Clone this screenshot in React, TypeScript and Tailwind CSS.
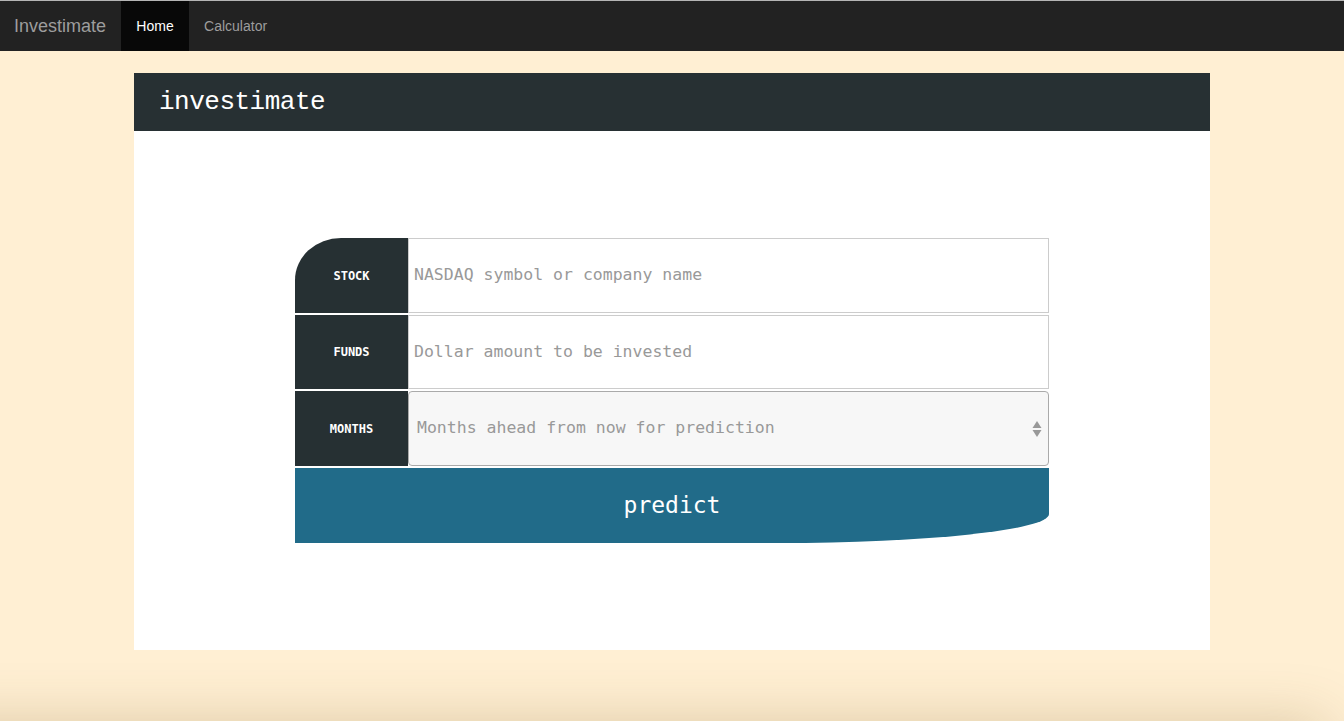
import React from "react";

const mono = { fontFamily: '"DejaVu Sans Mono", "Liberation Mono", monospace' };

function Label({ text, rounded }: { text: string; rounded?: boolean }) {
  return (
    <div
      className={`w-[113px] shrink-0 bg-[#263033] flex items-center justify-center text-white text-[12px] font-bold ${rounded ? "rounded-tl-[46px_42px]" : ""}`}
      style={mono}
    >
      {text}
    </div>
  );
}

export default function App() {
  return (
    <div
      className="relative h-screen overflow-hidden bg-[#ffefd3]"
      style={{ fontFamily: '"Liberation Sans", Arial, sans-serif' }}
    >
      <nav className="h-[51px] border-t border-[#b5b5b5] bg-[#222222] flex items-stretch">
        <div className="px-[14px] flex items-center text-[18px] text-[#9d9d9d]">Investimate</div>
        <div className="w-[68px] ml-[1px] bg-[#080808] flex items-center justify-center text-[14px] text-white">
          Home
        </div>
        <div className="px-[15px] flex items-center text-[14px] text-[#9d9d9d]">Calculator</div>
      </nav>

      <div className="w-[1076px] ml-[134px] mt-[22px] bg-white">
        <div className="h-[58px] bg-[#273033] flex items-center pl-[25px]">
          <span
            className="text-white text-[26px] leading-none tracking-[-0.5px]"
            style={{ fontFamily: '"Liberation Mono", "Courier New", monospace' }}
          >
            investimate
          </span>
        </div>
        <div className="pt-[107px] pb-[107px] flex justify-center">
          <div className="w-[754px] flex flex-col gap-[2px]">
            <div className="h-[75px] flex">
              <Label text="STOCK" rounded />
              <div className="flex-1 border border-[#cccccc] flex items-center pl-[5px] text-[16.5px] text-[#999999]" style={mono}>
                NASDAQ symbol or company name
              </div>
            </div>
            <div className="h-[74px] flex">
              <Label text="FUNDS" />
              <div className="flex-1 border border-[#cccccc] flex items-center pl-[5px] text-[16.5px] text-[#999999]" style={mono}>
                Dollar amount to be invested
              </div>
            </div>
            <div className="h-[75px] flex">
              <Label text="MONTHS" />
              <div
                className="flex-1 border border-[#aaaaaa] rounded-[4px] bg-[#f7f7f7] flex items-center pl-[8px] pr-[5px] text-[16.5px] text-[#999999]"
                style={mono}
              >
                <span className="flex-1">Months ahead from now for prediction</span>
                <svg width="10" height="18" viewBox="0 0 10 18" className="mr-[1px]">
                  <path d="M5 1 L9.5 8 L0.5 8 Z" fill="#999" />
                  <path d="M5 17 L9.5 10 L0.5 10 Z" fill="#999" />
                </svg>
              </div>
            </div>
            <div
              className="h-[75px] bg-[#216b89] flex items-center justify-center text-white text-[23px] rounded-br-[270px_29px]"
              style={mono}
            >
              predict
            </div>
          </div>
        </div>
      </div>

      <div className="pointer-events-none absolute left-[-80px] right-[18px] top-full h-[60px] shadow-[0_0_55px_rgba(120,90,30,0.25)]" />
    </div>
  );
}
